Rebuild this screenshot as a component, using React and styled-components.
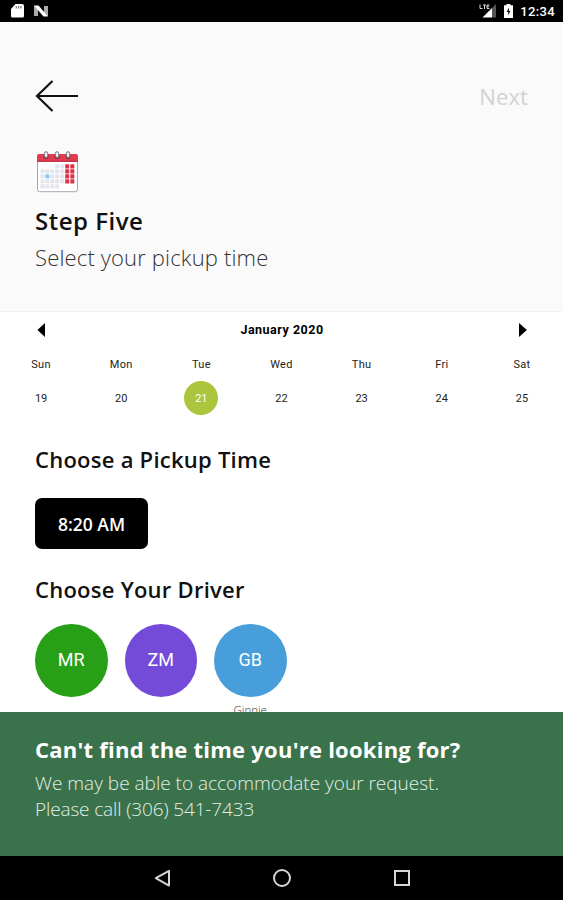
import React from "react";
import styled, { createGlobalStyle } from "styled-components";

const GlobalStyle = createGlobalStyle`
  * {
    box-sizing: border-box;
  }

  body {
    margin: 0;
    background: #fff;
    font-family: "Open Sans", sans-serif;
  }

  h1, h2, h3, p {
    margin: 0;
    white-space: nowrap;
  }

  button {
    padding: 0;
    border: none;
    background: none;
    font-family: inherit;
  }

  svg {
    display: block;
  }
`;

const Screen = styled.div`
  width: 100%;
  height: 100vh;
  display: flex;
  flex-direction: column;
  overflow: hidden;
`;

const StatusBar = styled.div`
  flex: none;
  height: 22px;
  padding: 0 8px 0 11px;
  display: flex;
  align-items: center;
  justify-content: space-between;
  background: #000;
  color: #fff;
`;

const StatusGroup = styled.div`
  display: flex;
  align-items: center;
  gap: ${(props) => props.$gap};
`;

const Clock = styled.span`
  font: 500 13px/22px Roboto, sans-serif;
  letter-spacing: 0.35px;
  padding-top: 2px;
`;

const Header = styled.header`
  flex: none;
  height: 290px;
  padding: 56px 35px 0;
  background: #fafafa;
  border-bottom: 1px solid #f2f2f2;
`;

const TopRow = styled.div`
  height: 36px;
  display: flex;
  align-items: center;
  justify-content: space-between;
  margin-bottom: 37px;
`;

const NextButton = styled.button`
  font-size: 22px;
  line-height: 36px;
  letter-spacing: 0.1px;
  color: #d2d2d2;
`;

const StepTitle = styled.h1`
  margin-top: 10px;
  font-size: 24px;
  font-weight: 600;
  line-height: 36px;
  letter-spacing: 0.5px;
  color: #111;
`;

const StepText = styled.p`
  font-size: 22px;
  font-weight: 300;
  line-height: 36px;
  letter-spacing: 0.16px;
  color: #333;
`;

const Content = styled.main`
  flex: 1;
  min-height: 0;
  overflow: hidden;
`;

const MonthRow = styled.div`
  height: 36px;
  padding: 0 35px 0 36px;
  display: flex;
  align-items: center;
  justify-content: space-between;
`;

const Month = styled.h3`
  font: 700 12.5px/36px Roboto, sans-serif;
  letter-spacing: 0.5px;
  color: #000;
`;

const Week = styled.div`
  display: grid;
  grid-template-columns: repeat(7, 1fr);
  justify-items: center;
  padding: 0 1px;
  font: 400 11px/33px Roboto, sans-serif;
  letter-spacing: ${(props) => props.$spacing || "0"};
  color: #222;
`;

const DayNumber = styled.div`
  width: 34px;
  height: 34px;
  border-radius: 50%;
  line-height: 35px;
  text-align: center;
  background: ${(props) => (props.$selected ? "#abc63c" : "transparent")};
  color: ${(props) => (props.$selected ? "#fff" : "#222")};
`;

const Choices = styled.section`
  padding: ${(props) => props.$top} 35px 0;
`;

const SectionTitle = styled.h2`
  font-size: 22px;
  font-weight: 600;
  line-height: 34px;
  letter-spacing: 0.25px;
  color: #111;
`;

const TimeButton = styled.button`
  display: block;
  width: 113px;
  height: 51px;
  margin-top: 22px;
  padding-top: 1px;
  border-radius: 7px;
  background: #000;
  color: #fff;
  font-size: 17.5px;
  font-weight: 600;
`;

const Drivers = styled.div`
  display: flex;
  gap: 17px;
  margin-top: 18px;
`;

const Driver = styled.div`
  width: 72.5px;
  text-align: center;
`;

const Avatar = styled.div`
  height: 72.5px;
  border-radius: 50%;
  background: ${(props) => props.$color};
  color: #fff;
  font: 400 18px/72px Roboto, sans-serif;
`;

const DriverName = styled.p`
  margin-top: 5px;
  font-size: 11.5px;
  font-weight: 300;
  line-height: 16px;
  color: #333;
`;

const Notice = styled.footer`
  flex: none;
  height: 144px;
  padding: 20px 35px 0;
  background: #3a724c;
  color: #fff;
`;

const NoticeTitle = styled.h2`
  margin-bottom: 4px;
  font-size: 22px;
  font-weight: 700;
  line-height: 34px;
  letter-spacing: 0.24px;
`;

const NoticeText = styled.p`
  font-size: 19px;
  font-weight: 300;
  line-height: 26px;
  letter-spacing: ${(props) => props.$spacing || "0"};
  color: #e4eee7;
`;

const NavBar = styled.nav`
  flex: none;
  height: 44px;
  display: flex;
  align-items: center;
  justify-content: center;
  gap: 102px;
  background: #000;
`;

const days = [
  { name: "Sun", date: 19 },
  { name: "Mon", date: 20 },
  { name: "Tue", date: 21 },
  { name: "Wed", date: 22 },
  { name: "Thu", date: 23 },
  { name: "Fri", date: 24 },
  { name: "Sat", date: 25 },
];

const selectedDate = 21;

const drivers = [
  { initials: "MR", color: "#279f17" },
  { initials: "ZM", color: "#744bd8" },
  { initials: "GB", color: "#489edb", name: "Ginnie" },
];

const SdCardIcon = () => (
  <svg width="13" height="14" viewBox="0 0 13 14">
    <path d="M4.5 0H11a2 2 0 0 1 2 2v10a1.5 1.5 0 0 1-1.5 1.5h-10A1.5 1.5 0 0 1 0 12V5z" fill="#fff" />
    <path d="M5.3 2v2.5M7.6 2v2.5M9.9 2v2.5" stroke="#777" strokeWidth="1.2" />
  </svg>
);

const AndroidNIcon = () => (
  <svg width="14" height="12" viewBox="0 0 14 12">
    <path d="M0 1h4v10H0zM10 1h4v10h-4z" fill="#aaa" />
    <path d="M0 0.5h4.5L14 11.5H9.5z" fill="#fff" />
  </svg>
);

const SignalIcon = () => (
  <svg width="18" height="14" viewBox="0 0 18 14">
    <path d="M17 0v13.5h-4V4z" fill="#555" />
    <path d="M13 4v9.5H3.5z" fill="#fff" />
    <path d="M1 .5v4h2.5M4 1h3M5.5 1v4M10.5 1H8v3.5h2.5M8 2.7h2" fill="none" stroke="#ddd" />
  </svg>
);

const BatteryIcon = () => (
  <svg width="9" height="14" viewBox="0 0 9 14">
    <path d="M2.5 0h4v1.3H9V14H0V1.3h2.5z" fill="#fff" />
    <path d="M5 3.5 2.7 8h1.5v3.5L6.4 7H5z" fill="#111" />
  </svg>
);

const BackArrow = () => (
  <svg width="44" height="36" viewBox="0 0 44 36" fill="none" stroke="#111" strokeWidth="2.2">
    <path d="M17.5 3 2 18l15.5 15M2 18h41" />
  </svg>
);

// white page cells on the left, red weekend cells on the right
const CalendarIcon = () => (
  <svg width="44" height="42" viewBox="0 0 44 42">
    <rect x="2.5" y="4" width="40" height="36.7" rx="2" fill="#fff" stroke="#aaa5ad" />
    <path d="M2 11V5q0-2 2-2h37q2 0 2 2v6z" fill="#e33b50" />
    <path d="M2 9.5h41V11H2z" fill="#c4364b" />
    {[0, 1, 2, 3, 4].map((row) =>
      [0, 1, 2, 3, 4].map((col) =>
        (row === 0 && col < 3) || (row === 4 && col > 3) ? null : (
          <rect
            key={`${row}-${col}`}
            x={5.5 + col * 4.9}
            y={13.3 + row * 5}
            width="4"
            height="4"
            fill={row === 2 && col === 1 ? "#8cc8ed" : "#e2e5ed"}
          />
        )
      )
    )}
    {[0, 1, 2, 3].map((row) =>
      [0, 1].map((col) => (
        <rect key={`${row}-${col}`} x={30.2 + col * 5.1} y={13.3 + row * 5} width="4" height="4.2" rx="0.5" fill="#df3049" />
      ))
    )}
    {[11, 22, 33].map((x) => (
      <g key={x}>
        <circle cx={x} cy="5.5" r="2.6" fill="#8e3345" />
        <rect x={x - 1.6} y="0.7" width="3.4" height="5.8" rx="1.7" fill="#ededf0" stroke="#77777d" strokeWidth="1" />
      </g>
    ))}
  </svg>
);

const Triangle = ({ right }) => (
  <svg width="10" height="14" viewBox="0 0 10 14">
    <path d={right ? "M1 0v14L8.9 7z" : "M9 0v14L1.4 7z"} fill="#000" />
  </svg>
);

const App = () => {
  return (
    <>
      <GlobalStyle />
      <Screen>
        <StatusBar>
          <StatusGroup $gap="10px">
            <SdCardIcon />
            <AndroidNIcon />
          </StatusGroup>
          <StatusGroup $gap="7px">
            <SignalIcon />
            <BatteryIcon />
            <Clock>12:34</Clock>
          </StatusGroup>
        </StatusBar>
        <Header>
          <TopRow>
            <BackArrow />
            <NextButton>Next</NextButton>
          </TopRow>
          <CalendarIcon />
          <StepTitle>Step Five</StepTitle>
          <StepText>Select your pickup time</StepText>
        </Header>
        <Content>
          <MonthRow>
            <Triangle />
            <Month>January 2020</Month>
            <Triangle right />
          </MonthRow>
          <Week $spacing="0.3px">
            {days.map((day) => (
              <span key={day.name}>{day.name}</span>
            ))}
          </Week>
          <Week>
            {days.map((day) => (
              <DayNumber key={day.date} $selected={day.date === selectedDate}>
                {day.date}
              </DayNumber>
            ))}
          </Week>
          <Choices $top="27px">
            <SectionTitle>Choose a Pickup Time</SectionTitle>
            <TimeButton>8:20 AM</TimeButton>
          </Choices>
          <Choices $top="23px">
            <SectionTitle>Choose Your Driver</SectionTitle>
            <Drivers>
              {drivers.map((driver) => (
                <Driver key={driver.initials}>
                  <Avatar $color={driver.color}>{driver.initials}</Avatar>
                  {driver.name && <DriverName>{driver.name}</DriverName>}
                </Driver>
              ))}
            </Drivers>
          </Choices>
        </Content>
        <Notice>
          <NoticeTitle>Can't find the time you're looking for?</NoticeTitle>
          <NoticeText>We may be able to accommodate your request.</NoticeText>
          <NoticeText $spacing="-0.13px">Please call (306) 541-7433</NoticeText>
        </Notice>
        <NavBar>
          <svg width="18" height="18" viewBox="0 0 18 18" fill="none" stroke="#d5d5d5" strokeWidth="2">
            <path d="M16 1.8v14.8L2.8 9.2z" strokeLinejoin="round" />
          </svg>
          <svg width="18" height="18" viewBox="0 0 18 18" fill="none" stroke="#d5d5d5" strokeWidth="2">
            <circle cx="9" cy="9" r="8" />
          </svg>
          <svg width="18" height="18" viewBox="0 0 18 18" fill="none" stroke="#d5d5d5" strokeWidth="2">
            <rect x="2" y="2" width="14" height="14" />
          </svg>
        </NavBar>
      </Screen>
    </>
  );
};

export default App;
